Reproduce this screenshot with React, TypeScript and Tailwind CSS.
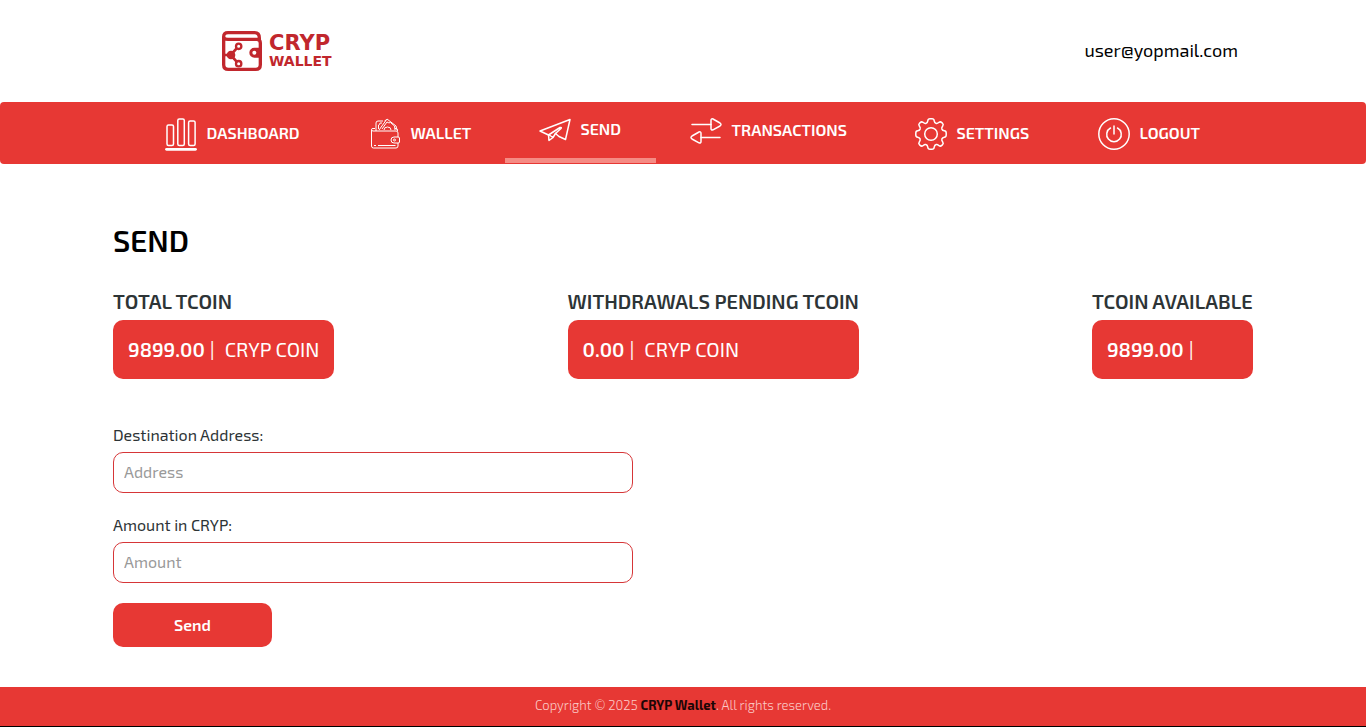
import type { ReactNode } from "react";

interface NavItemTypes {
  label: string;
  width: string;
  icon: ReactNode;
  active?: boolean;
}

interface BalanceTypes {
  title: string;
  amount: string;
  coin?: string;
  width: string;
}

interface FieldTypes {
  id: string;
  label: string;
  placeholder: string;
}

function Logo() {
  return (
    <a href="#" className="flex items-center gap-[7px] text-[#c1272d]">
      <svg
        viewBox="0 0 120 120"
        className="h-10 w-10"
        fill="none"
        stroke="currentColor"
        strokeWidth="10"
        aria-hidden="true"
      >
        <path d="M112 25V21C112 10 107 5 98 5H18C10 5 5 10 5 17V101C5 110 10 115 19 115H101C110 115 115 110 115 101V36C115 29 111 25 104 25H18C10 25 5 22 5 17" />
        <path d="M115 55H97A10 10 0 0 0 97 75H115Z" fill="currentColor" />
        <circle cx="97" cy="65" r="6" fill="#fff" stroke="none" />
        <path d="M4 72H26M26 72L46 50M26 72L46 94" strokeWidth="8" />
        <circle cx="27" cy="72" r="13" fill="currentColor" stroke="none" />
        <circle cx="50" cy="46" r="8" fill="#fff" strokeWidth="7" />
        <circle cx="50" cy="98" r="8" fill="#fff" strokeWidth="7" />
      </svg>
      <span className="flex flex-col font-['DejaVu_Sans',sans-serif] font-bold">
        <span className="text-[21px] leading-5">CRYP</span>
        <span className="text-[14px] leading-4">WALLET</span>
      </span>
    </a>
  );
}

function DashboardIcon() {
  return (
    <svg viewBox="0 0 32 34" className="h-[34px] w-8" fill="none" stroke="currentColor" strokeWidth="1.5" aria-hidden="true">
      <rect x="2" y="8" width="6.5" height="20.5" rx="1.5" />
      <rect x="12.8" y="2" width="6.5" height="26.5" rx="1.5" />
      <rect x="23.6" y="4" width="6.5" height="24.5" rx="1.5" />
      <path d="M1.5 32.3H30.5" strokeWidth="2.8" strokeLinecap="round" />
    </svg>
  );
}

function WalletIcon() {
  return (
    <svg viewBox="0 1 32 34" className="h-[34px] w-8" fill="none" stroke="currentColor" strokeWidth="1" strokeLinejoin="round" aria-hidden="true">
      <path d="M29 21V17Q29 15 27 15H4Q2.500 15 2.500 13.500Q2.500 12.500 4 12.500H6M2.500 13.500V30Q2.500 32 4.500 32H27Q29 32 29 30V27" />
      <path d="M26 12.500H27.500Q28.500 12.500 28.500 15M5 29.500H7M9 29.500H26.500" />
      <path d="M29 21H25Q22 21 22 24T25 27H29Q30.500 27 30.500 26V22Q30.500 21 29 21Z" />
      <circle cx="25.500" cy="24" r="1" />
      <path d="M7 15V7Q7 5 9 5H14M9.500 13V9Q11 9 11 7H13M10 14L18 3L27 10L28 14M13 13L18 6Q20 7.500 21.500 6.500L25.500 10L26 14" />
      <path d="M15 14Q15 11 18.500 11T22 14M15.500 5L17 4" />
    </svg>
  );
}

function SendIcon() {
  return (
    <svg viewBox="0 0 32 26" className="h-[26px] w-8" fill="none" stroke="currentColor" strokeWidth="1.5" strokeLinejoin="round" strokeLinecap="round" aria-hidden="true">
      <path d="M1 14L31 2.500L26.500 22.500L20 19.500L16.500 16.500L22 11.500Q23 10 21 10.500L9.500 18L1 14Z" />
      <path d="M9.500 18L10 23.500L14 20.500L11 18.500M14 20.500L16.500 16.500" />
    </svg>
  );
}

function TransactionsIcon() {
  return (
    <svg viewBox="0 0 32 28" className="h-7 w-8" fill="none" stroke="currentColor" strokeWidth="1.5" strokeLinejoin="round" strokeLinecap="round" aria-hidden="true">
      <path d="M2 7.500H21M11 20.500H30" />
      <path d="M21 3.500Q21 1.200 23 2L30 6Q32 7.500 30 9L23 12.800Q21 13.500 21 11.500Z" />
      <path d="M11 16.500Q11 14.200 9 15L2 19Q0 20.500 2 22L9 25.800Q11 26.500 11 24.500Z" />
    </svg>
  );
}

function SettingsIcon() {
  return (
    <svg viewBox="0 0 32 34" className="h-[34px] w-8" fill="none" stroke="currentColor" strokeWidth="1.5" strokeLinejoin="round" aria-hidden="true">
      <circle cx="16" cy="17" r="6.300" />
      <path d="M12.800 3.800Q13 1.800 15 1.800H17Q19 1.800 19.200 3.800Q19.500 6 21.200 6.400Q22.500 6.600 24 5.300Q25.500 4.300 26.800 5.600L27.500 6.300Q28.800 7.600 27.700 9Q26.400 10.700 26.900 12.100Q27.500 13.600 29.300 13.800Q31.200 14 31.200 16V18Q31.200 20 29.300 20.200Q27.500 20.400 26.900 21.900Q26.400 23.300 27.700 25Q28.800 26.400 27.500 27.700L26.800 28.400Q25.500 29.700 24 28.700Q22.500 27.400 21.200 27.600Q19.500 28 19.200 30.200Q19 32.200 17 32.200H15Q13 32.200 12.800 30.200Q12.500 28 10.800 27.600Q9.500 27.400 8 28.700Q6.500 29.700 5.200 28.400L4.500 27.700Q3.200 26.400 4.300 25Q5.600 23.300 5.100 21.900Q4.500 20.400 2.700 20.200Q.8 20 .8 18V16Q.8 14 2.700 13.800Q4.500 13.600 5.100 12.100Q5.600 10.700 4.300 9Q3.200 7.600 4.500 6.300L5.200 5.600Q6.500 4.300 8 5.300Q9.500 6.600 10.800 6.400Q12.500 6 12.800 3.800Z" />
    </svg>
  );
}

function LogoutIcon() {
  return (
    <svg viewBox="0 0 32 34" className="h-[34px] w-8" fill="none" stroke="currentColor" strokeWidth="1.5" strokeLinecap="round" aria-hidden="true">
      <circle cx="16" cy="17" r="15.200" />
      <path d="M16 9V17M12.500 11A7.300 7.300 0 1 0 19.500 11" />
    </svg>
  );
}

const navItems: NavItemTypes[] = [
  { label: "DASHBOARD", width: "w-[204px]", icon: <DashboardIcon /> },
  { label: "WALLET", width: "w-[170px]", icon: <WalletIcon /> },
  { label: "SEND", width: "w-[151px]", icon: <SendIcon />, active: true },
  { label: "TRANSACTIONS", width: "w-[225px]", icon: <TransactionsIcon /> },
  { label: "SETTINGS", width: "w-[183px]", icon: <SettingsIcon /> },
  { label: "LOGOUT", width: "w-[170px]", icon: <LogoutIcon /> },
];

const balances: BalanceTypes[] = [
  { title: "TOTAL TCOIN", amount: "9899.00", coin: "CRYP COIN", width: "min-w-[221px]" },
  { title: "WITHDRAWALS PENDING TCOIN", amount: "0.00", coin: "CRYP COIN", width: "min-w-[291px]" },
  { title: "TCOIN AVAILABLE", amount: "9899.00", width: "min-w-[161px]" },
];

function NavItem({ label, width, icon, active = false }: NavItemTypes) {
  return (
    <li className={`${width} flex shrink-0`}>
      <a
        href="#"
        className={`${
          active ? "border-[#f58b84]" : "border-transparent"
        } flex w-full items-start border-b-5 pt-[15px] pl-[34px]`}
      >
        <span className="flex items-center gap-2.5 whitespace-nowrap text-[16px] leading-5 font-semibold">
          {icon}
          <span className="pb-[3px]">{label}</span>
        </span>
      </a>
    </li>
  );
}

function Balance({ title, amount, coin, width }: BalanceTypes) {
  return (
    <section className={`${width} whitespace-nowrap text-[20px] leading-[30px]`}>
      <h2 className="font-semibold text-[#2d3436]">{title}</h2>
      <p className="mt-1 flex h-[59px] items-center rounded-[10px] bg-[#e73834] px-[15px] pb-0.5 text-white">
        <span className="font-semibold">{amount}</span>
        <span className="ml-[5px] font-normal">|</span>
        {coin && <span className="ml-2.5 font-normal">{coin}</span>}
      </p>
    </section>
  );
}

function Field({ id, label, placeholder }: FieldTypes) {
  return (
    <div className="flex flex-col">
      <label htmlFor={id} className="mb-[5px] text-[16px] leading-6">
        {label}
      </label>
      <input
        id={id}
        type="text"
        placeholder={placeholder}
        className="h-[41px] w-full rounded-[10px] border border-[#d63638] bg-white px-2.5 pb-0.5 text-[16px] outline-none placeholder:text-[#999999]"
      />
    </div>
  );
}

export default function App() {
  return (
    <div className="flex min-h-screen flex-col bg-white font-['Exo_2',Roboto,sans-serif] text-[#2d3436]">
      <header className="flex h-[102px] items-center justify-between pr-32 pl-[222px]">
        <Logo />
        <span className="pb-0.5 text-[18px] text-black">user@yopmail.com</span>
      </header>

      <nav className="rounded-[4px] bg-[#e73834] text-white">
        <ul className="flex h-[62px] justify-center pr-0.5 pb-px">
          {navItems.map((item) => (
            <NavItem key={item.label} {...item} />
          ))}
        </ul>
      </nav>

      <main className="mx-auto w-full max-w-[1140px] flex-1 pt-[58px] pb-10">
        <h1 className="text-[30px] leading-9 font-semibold text-black">SEND</h1>

        <div className="mt-7 flex justify-between">
          {balances.map((balance) => (
            <Balance key={balance.title} {...balance} />
          ))}
        </div>

        <form className="mt-11 w-[520px]" onSubmit={(e) => e.preventDefault()}>
          <div className="flex flex-col gap-5">
            <Field id="address" label="Destination Address:" placeholder="Address" />
            <Field id="amount" label="Amount in CRYP:" placeholder="Amount" />
          </div>
          <button
            type="submit"
            className="mt-5 h-11 w-[159px] rounded-[10px] bg-[#e73834] text-[16px] font-semibold text-white"
          >
            Send
          </button>
        </form>
      </main>

      <footer className="flex h-10 items-center justify-center border-b border-black bg-[#e73834] pb-0.5 text-[13px] font-light text-[#fbc9c6]">
        <p>
          Copyright © 2025 <b className="font-bold text-[#1c0606]">CRYP Wallet</b>. All rights reserved.
        </p>
      </footer>
    </div>
  );
}
